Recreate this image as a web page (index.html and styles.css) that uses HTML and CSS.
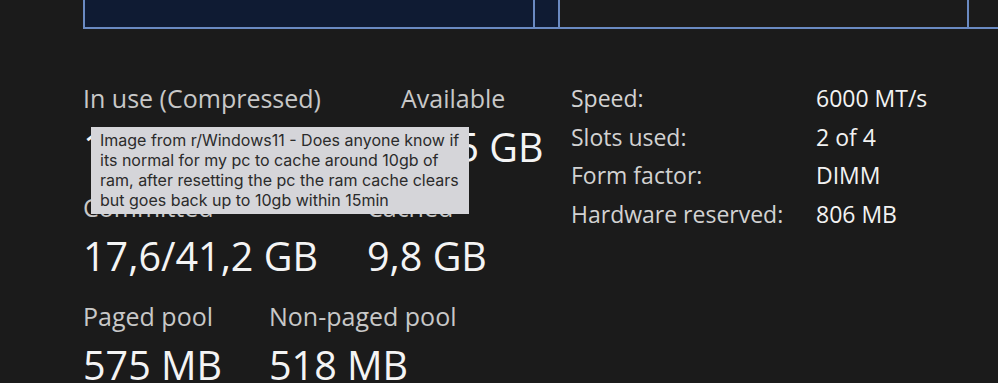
FILE: index.html
```html
<!DOCTYPE html>
<html lang="en">
<head>
<meta charset="utf-8">
<title>Memory</title>
<link rel="stylesheet" href="styles.css">
</head>
<body>
<div class="graph">
  <div class="seg seg-inuse"></div>
  <div class="seg seg-modified"></div>
  <div class="seg seg-standby"></div>
  <div class="seg seg-free"></div>
</div>
<div class="details">
  <div class="left">
    <div class="row row-1">
      <div class="cell"><div class="label">In use (Compressed)</div><div class="value">14,1 GB (0 MB)</div></div>
      <div class="cell"><div class="label">Available</div><div class="value">21,5 GB</div></div>
    </div>
    <div class="row row-2">
      <div class="cell"><div class="label">Committed</div><div class="value">17,6/41,2 GB</div></div>
      <div class="cell"><div class="label">Cached</div><div class="value">9,8 GB</div></div>
    </div>
    <div class="row row-3">
      <div class="cell"><div class="label">Paged pool</div><div class="value">575 MB</div></div>
      <div class="cell"><div class="label">Non-paged pool</div><div class="value">518 MB</div></div>
    </div>
  </div>
  <div class="right">
    <div class="k">Speed:</div><div class="v">6000 MT/s</div>
    <div class="k">Slots used:</div><div class="v">2 of 4</div>
    <div class="k">Form factor:</div><div class="v">DIMM</div>
    <div class="k">Hardware reserved:</div><div class="v">806 MB</div>
  </div>
</div>
<div class="tooltip">Image from r/Windows11 - Does anyone know if its normal for my pc to cache around 10gb of ram, after resetting the pc the ram cache clears but goes back up to 10gb within 15min</div>
</body>
</html>
```
FILE: styles.css
```css
html, body {
  margin: 0;
  padding: 0;
}
body {
  width: 998px;
  height: 383px;
  overflow: hidden;
  background: #1b1b1b;
  font-family: "Open Sans", "Noto Sans", sans-serif;
  position: relative;
}
.graph {
  display: flex;
  margin-left: 83px;
  height: 27px;
  border-bottom: 2px solid #6a8ac2;
}
.seg {
  border-left: 2px solid #6a8ac2;
  box-sizing: border-box;
}
.seg-inuse {
  width: 450px;
  background: #0f1b33;
}
.seg-modified {
  width: 25px;
  background: #0f1b33;
}
.seg-standby {
  width: 409px;
}
.seg-free {
  flex: 1;
}
.details {
  display: flex;
  align-items: flex-start;
  padding-top: 50px;
  padding-left: 83px;
}
.left {
  width: 488px;
  padding-top: 4px;
}
.row {
  display: grid;
  margin-bottom: 25px;
}
.row-1 { grid-template-columns: 318px auto; }
.row-2 { grid-template-columns: 284px auto; }
.row-3 { grid-template-columns: 186px auto; }
.label {
  font-size: 25px;
  line-height: 30px;
  color: #c8c8c8;
  white-space: nowrap;
}
.value {
  margin-top: 14px;
  font-size: 39.5px;
  line-height: 40px;
  color: #f4f4f4;
  white-space: nowrap;
}
.right {
  display: grid;
  grid-template-columns: 245px auto;
  align-content: start;
  font-size: 23px;
  line-height: 38.5px;
  white-space: nowrap;
}
.k {
  color: #d2d2d2;
}
.v {
  color: #f2f2f2;
}
.tooltip {
  position: absolute;
  left: 91px;
  top: 127px;
  width: 378px;
  height: 87px;
  box-sizing: border-box;
  padding: 3px 9px 4px;
  background: #d5d5d9;
  color: #2b2b2b;
  font-family: Inter, "Noto Sans", sans-serif;
  font-size: 16px;
  line-height: 20px;
}
```
